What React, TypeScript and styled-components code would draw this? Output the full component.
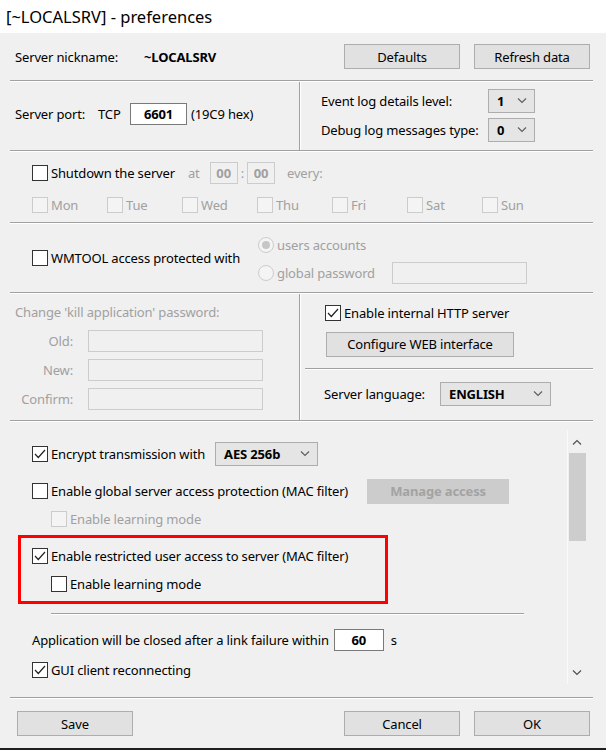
import styled, { createGlobalStyle } from "styled-components";

const GlobalStyle = createGlobalStyle`
  html, body {
    margin: 0;
    padding: 0;
    background: #f0f0f0;
  }
  body {
    font-family: "Noto Sans", "Open Sans", sans-serif;
    font-size: 13px;
    letter-spacing: -0.15px;
    color: #000;
  }
  * { box-sizing: border-box; }
`;

const colors = {
  face: "#f0f0f0",
  button: "#e1e1e1",
  buttonBorder: "#adadad",
  disabledText: "#a0a0a0",
  disabledBorder: "#cccccc",
  etch: "#a0a0a0",
};

const Window = styled.div`
  width: 606px;
  height: 750px;
  background: ${colors.face};
  display: flex;
  flex-direction: column;
  border-bottom: 2px solid #1f1f1f;
  overflow: hidden;
`;

const TitleBar = styled.div`
  height: 33px;
  flex: none;
  background: #fff;
  display: flex;
  align-items: center;
  padding-left: 6px;
  font-size: 16.5px;
  letter-spacing: 0;
  color: #000;
`;

const Body = styled.div`
  flex: 1;
  display: flex;
  flex-direction: column;
  padding: 0 13px 0 10px;
`;

const Separator = styled.div<{ $inset?: number; $width?: number }>`
  flex: none;
  height: 2px;
  border-top: 1px solid ${colors.etch};
  border-bottom: 1px solid #fff;
  margin-left: ${(p) => p.$inset ?? 0}px;
  width: ${(p) => (p.$width ? `${p.$width}px` : "auto")};
`;

const VSeparator = styled.div`
  flex: none;
  width: 2px;
  border-left: 1px solid ${colors.etch};
  border-right: 1px solid #fff;
  align-self: stretch;
`;

const Row = styled.div<{ $h?: number; $pl?: number; $gap?: number; $mt?: number }>`
  display: flex;
  align-items: center;
  height: ${(p) => p.$h ?? 18}px;
  padding-left: ${(p) => p.$pl ?? 0}px;
  margin-top: ${(p) => p.$mt ?? 0}px;
  gap: ${(p) => p.$gap ?? 0}px;
  white-space: nowrap;
`;

const Label = styled.span<{ $disabled?: boolean; $bold?: boolean; $w?: number; $right?: boolean }>`
  color: ${(p) => (p.$disabled ? colors.disabledText : "#000")};
  font-weight: ${(p) => (p.$bold ? 700 : 400)};
  ${(p) => (p.$w ? `width: ${p.$w}px; flex: none;` : "")}
  ${(p) => (p.$right ? "text-align: right;" : "")}
`;

const Button = styled.div<{ $w?: number; $disabled?: boolean }>`
  width: ${(p) => p.$w ?? 116}px;
  height: 25px;
  display: flex;
  align-items: center;
  justify-content: center;
  background: ${(p) => (p.$disabled ? "#cccccc" : colors.button)};
  border: 1px solid ${(p) => (p.$disabled ? "#cccccc" : colors.buttonBorder)};
  color: ${(p) => (p.$disabled ? "#a3a3a3" : "#000")};
  font-weight: ${(p) => (p.$disabled ? 700 : 400)};
  flex: none;
`;

const TextBox = styled.div<{ $w: number; $disabled?: boolean; $center?: boolean }>`
  width: ${(p) => p.$w}px;
  height: 22px;
  flex: none;
  background: ${(p) => (p.$disabled ? colors.face : "#fff")};
  border: 1px solid ${(p) => (p.$disabled ? colors.disabledBorder : "#7a7a7a")};
  color: ${(p) => (p.$disabled ? colors.disabledText : "#000")};
  font-weight: 700;
  display: flex;
  align-items: center;
  justify-content: ${(p) => (p.$center ? "center" : "flex-start")};
`;

const SelectBox = styled.div<{ $w: number }>`
  width: ${(p) => p.$w}px;
  height: 24px;
  flex: none;
  background: #e5e5e5;
  border: 1px solid ${colors.buttonBorder};
  display: flex;
  align-items: center;
  justify-content: space-between;
  padding: 0 7px 0 8px;
  font-weight: 700;
`;

const Chevron = ({ up = false, color = "#606060" }: { up?: boolean; color?: string }) => (
  <svg width="10" height="6" viewBox="0 0 10 6">
    <path
      d={up ? "M1 5.5 L5 1.5 L9 5.5" : "M1 0.5 L5 4.5 L9 0.5"}
      fill="none"
      stroke={color}
      strokeWidth="1.2"
    />
  </svg>
);

const Select = ({ w, value }: { w: number; value: string }) => (
  <SelectBox $w={w}>
    <span>{value}</span>
    <Chevron />
  </SelectBox>
);

const Box = styled.div<{ $disabled?: boolean }>`
  width: 16px;
  height: 16px;
  flex: none;
  background: ${(p) => (p.$disabled ? "#f4f4f4" : "#fff")};
  border: 1px solid ${(p) => (p.$disabled ? colors.disabledBorder : "#333")};
  display: flex;
  align-items: center;
  justify-content: center;
  margin-right: 3px;
`;

const Check = ({
  checked = false,
  disabled = false,
  label,
}: {
  checked?: boolean;
  disabled?: boolean;
  label: string;
}) => (
  <>
    <Box $disabled={disabled}>
      {checked && (
        <svg width="12" height="10" viewBox="0 0 12 10">
          <path d="M1 5 L4.3 8.5 L11 1" fill="none" stroke="#222" strokeWidth="1.2" />
        </svg>
      )}
    </Box>
    <Label $disabled={disabled}>{label}</Label>
  </>
);

const RadioCircle = styled.div`
  width: 16px;
  height: 16px;
  flex: none;
  border-radius: 50%;
  border: 1px solid ${colors.disabledBorder};
  background: #f4f4f4;
  display: flex;
  align-items: center;
  justify-content: center;
  margin-right: 3px;
`;

const RadioDot = styled.div`
  width: 8px;
  height: 8px;
  border-radius: 50%;
  background: #c6c6c6;
`;

const Radio = ({ checked = false, label }: { checked?: boolean; label: string }) => (
  <>
    <RadioCircle>{checked && <RadioDot />}</RadioCircle>
    <Label $disabled>{label}</Label>
  </>
);

/* header */
const NickRow = styled.div`
  height: 47px;
  flex: none;
  display: flex;
  align-items: center;
  padding: 0 3px 0 5px;
  gap: 14px;
`;

const ButtonGroup = styled.div`
  margin-left: auto;
  display: flex;
  gap: 14px;
`;

const Split = styled.div<{ $h: number }>`
  height: ${(p) => p.$h}px;
  flex: none;
  display: flex;
`;

const LeftPane = styled.div<{ $pt?: number }>`
  width: 289px;
  flex: none;
  display: flex;
  flex-direction: column;
  padding: ${(p) => p.$pt ?? 0}px 0 0 5px;
`;

const RightPane = styled.div<{ $pt?: number }>`
  flex: 1;
  display: flex;
  flex-direction: column;
  padding-top: ${(p) => p.$pt ?? 0}px;
`;

const Section = styled.div<{ $h: number; $pt?: number }>`
  height: ${(p) => p.$h}px;
  flex: none;
  display: flex;
  flex-direction: column;
  padding-top: ${(p) => p.$pt ?? 0}px;
`;

const DayGrid = styled.div`
  display: grid;
  grid-template-columns: repeat(7, 75px);
  padding-left: 22px;
  margin-top: 12px;
  height: 18px;
`;

const Day = styled.div`
  display: flex;
  align-items: center;
`;

const WmtoolSection = styled.div`
  height: 68px;
  flex: none;
  display: flex;
  align-items: center;
  padding-left: 22px;
`;

const RadioColumn = styled.div`
  display: flex;
  flex-direction: column;
  margin-left: 18px;
  gap: 6px;
  padding-top: 2px;
`;

const PassGrid = styled.div`
  display: grid;
  grid-template-columns: 58px 175px;
  column-gap: 15px;
  row-gap: 7px;
  margin-top: 9px;
  align-items: center;
`;

/* scrolled options */
const ScrollArea = styled.div`
  height: 275px;
  flex: none;
  display: flex;
`;

const ScrollContent = styled.div`
  flex: 1;
  overflow: hidden;
  padding: 20px 0 0 8px;
  display: flex;
  flex-direction: column;
`;

const Highlight = styled.div`
  width: 370px;
  height: 69px;
  flex: none;
  margin-top: 7px;
  border: 3px solid #ff0000;
  padding: 6px 0 0 11px;
  display: flex;
  flex-direction: column;
`;

const ScrollBar = styled.div`
  width: 19px;
  flex: none;
  margin: 8px 7px 13px 0;
  border-left: 1px solid #fafafa;
  display: flex;
  flex-direction: column;
  align-items: center;
`;

const ScrollArrow = styled.div`
  height: 23px;
  flex: none;
  display: flex;
  align-items: center;
  justify-content: center;
`;

const ScrollThumb = styled.div`
  width: 17px;
  height: 88px;
  flex: none;
  background: #cdcdcd;
`;

const ScrollTrack = styled.div`
  flex: 1;
`;

const Footer = styled.div`
  flex: 1;
  display: flex;
  padding: 12px 3px 0 7px;
  gap: 14px;
`;

const days = ["Mon", "Tue", "Wed", "Thu", "Fri", "Sat", "Sun"];

export default function App() {
  return (
    <>
      <GlobalStyle />
      <Window>
        <TitleBar>[~LOCALSRV] - preferences</TitleBar>
        <Body>
          <NickRow>
            <Label $w={115}>Server nickname:</Label>
            <Label $bold>~LOCALSRV</Label>
            <ButtonGroup>
              <Button>Defaults</Button>
              <Button>Refresh data</Button>
            </ButtonGroup>
          </NickRow>
          <Separator />

          <Split $h={68}>
            <LeftPane $pt={21}>
              <Row $h={22}>
                <Label $w={83}>Server port:</Label>
                <Label $w={32}>TCP</Label>
                <TextBox $w={57} $center>6601</TextBox>
                <Label style={{ marginLeft: 4 }}>(19C9 hex)</Label>
              </Row>
            </LeftPane>
            <VSeparator />
            <RightPane $pt={7}>
              <Row $h={24} $pl={20}>
                <Label $w={167}>Event log details level:</Label>
                <Select w={47} value="1" />
              </Row>
              <Row $h={24} $pl={20} $mt={5}>
                <Label $w={167}>Debug log messages type:</Label>
                <Select w={47} value="0" />
              </Row>
            </RightPane>
          </Split>
          <Separator />

          <Section $h={70} $pt={10}>
            <Row $h={22} $pl={22}>
              <Check label="Shutdown the server" />
              <Label $disabled style={{ marginLeft: 13, marginRight: 10 }}>
                at
              </Label>
              <TextBox $w={28} $disabled $center>
                00
              </TextBox>
              <Label $disabled style={{ margin: "0 3px" }}>
                :
              </Label>
              <TextBox $w={28} $disabled $center>
                00
              </TextBox>
              <Label $disabled style={{ marginLeft: 12 }}>
                every:
              </Label>
            </Row>
            <DayGrid>
              {days.map((d) => (
                <Day key={d}>
                  <Check disabled label={d} />
                </Day>
              ))}
            </DayGrid>
          </Section>
          <Separator />

          <WmtoolSection>
            <Check label="WMTOOL access protected with" />
            <RadioColumn>
              <Row $h={22}>
                <Radio checked label="users accounts" />
              </Row>
              <Row $h={22}>
                <Radio label="global password" />
                <TextBox $w={135} $disabled style={{ marginLeft: 17 }} />
              </Row>
            </RadioColumn>
          </WmtoolSection>
          <Separator />

          <Split $h={126}>
            <LeftPane $pt={9}>
              <Row>
                <Label $disabled>Change 'kill application' password:</Label>
              </Row>
              <PassGrid>
                {["Old:", "New:", "Confirm:"].map((l) => (
                  <>
                    <Label key={l} $disabled $right>
                      {l}
                    </Label>
                    <TextBox key={l + "b"} $w={175} $disabled />
                  </>
                ))}
              </PassGrid>
            </LeftPane>
            <VSeparator />
            <RightPane $pt={10}>
              <Row $pl={24}>
                <Check checked label="Enable internal HTTP server" />
              </Row>
              <Row $h={26} $pl={25} $mt={9}>
                <Button $w={188}>Configure WEB interface</Button>
              </Row>
              <Separator style={{ marginTop: 11, marginLeft: 4 }} />
              <Row $h={23} $pl={23} $mt={12}>
                <Label $w={116}>Server language:</Label>
                <Select w={111} value="ENGLISH" />
              </Row>
            </RightPane>
          </Split>
          <Separator />

          <ScrollArea>
            <ScrollContent>
              <Row $h={24} $pl={14}>
                <Check checked label="Encrypt transmission with" />
                <SelectBox $w={103} style={{ marginLeft: 10 }}>
                  <span>AES 256b</span>
                  <Chevron />
                </SelectBox>
              </Row>
              <Row $h={24} $pl={14} $mt={13}>
                <Check label="Enable global server access protection (MAC filter)" />
                <Button $w={142} $disabled style={{ marginLeft: 19 }}>
                  Manage access
                </Button>
              </Row>
              <Row $pl={33} $mt={7}>
                <Check disabled label="Enable learning mode" />
              </Row>
              <Highlight>
                <Row $mt={3}>
                  <Check checked label="Enable restricted user access to server (MAC filter)" />
                </Row>
                <Row $pl={19} $mt={10}>
                  <Check label="Enable learning mode" />
                </Row>
              </Highlight>
              <Separator $inset={33} $width={473} style={{ marginTop: 9 }} />
              <Row $h={22} $pl={14} $mt={14}>
                <Label>Application will be closed after a link failure within</Label>
                <TextBox $w={50} $center style={{ marginLeft: 5 }}>
                  60
                </TextBox>
                <Label style={{ marginLeft: 7 }}>s</Label>
              </Row>
              <Row $pl={14} $mt={10}>
                <Check checked label="GUI client reconnecting" />
              </Row>
            </ScrollContent>
            <ScrollBar>
              <ScrollArrow>
                <Chevron up color="#505050" />
              </ScrollArrow>
              <ScrollThumb />
              <ScrollTrack />
              <ScrollArrow>
                <Chevron color="#505050" />
              </ScrollArrow>
            </ScrollBar>
          </ScrollArea>
          <Separator />

          <Footer>
            <Button>Save</Button>
            <ButtonGroup>
              <Button>Cancel</Button>
              <Button>OK</Button>
            </ButtonGroup>
          </Footer>
        </Body>
      </Window>
    </>
  );
}
